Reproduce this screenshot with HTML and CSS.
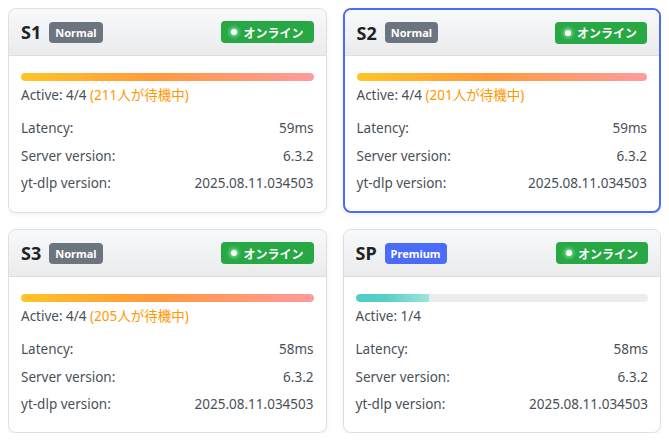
FILE: index.html
```html
<!DOCTYPE html>
<html lang="ja">
<head>
<meta charset="utf-8">
<link rel="stylesheet" href="styles.css">
</head>
<body>
<div class="grid">
  <div class="card">
    <div class="card-header">
      <div class="title"><span class="name">S1</span><span class="tier tier-normal">Normal</span></div>
      <span class="status"><span class="dot"></span>オンライン</span>
    </div>
    <div class="card-body">
      <div class="bar"><div class="fill fill-full" style="width:100%"></div></div>
      <div class="active">Active: 4/4 <span class="queue">(211人が待機中)</span></div>
      <div class="rows">
        <div class="row"><span>Latency:</span><span>59ms</span></div>
        <div class="row"><span>Server version:</span><span>6.3.2</span></div>
        <div class="row"><span>yt-dlp version:</span><span>2025.08.11.034503</span></div>
      </div>
    </div>
  </div>
  <div class="card selected">
    <div class="card-header">
      <div class="title"><span class="name">S2</span><span class="tier tier-normal">Normal</span></div>
      <span class="status"><span class="dot"></span>オンライン</span>
    </div>
    <div class="card-body">
      <div class="bar"><div class="fill fill-full" style="width:100%"></div></div>
      <div class="active">Active: 4/4 <span class="queue">(201人が待機中)</span></div>
      <div class="rows">
        <div class="row"><span>Latency:</span><span>59ms</span></div>
        <div class="row"><span>Server version:</span><span>6.3.2</span></div>
        <div class="row"><span>yt-dlp version:</span><span>2025.08.11.034503</span></div>
      </div>
    </div>
  </div>
  <div class="card">
    <div class="card-header">
      <div class="title"><span class="name">S3</span><span class="tier tier-normal">Normal</span></div>
      <span class="status"><span class="dot"></span>オンライン</span>
    </div>
    <div class="card-body">
      <div class="bar"><div class="fill fill-full" style="width:100%"></div></div>
      <div class="active">Active: 4/4 <span class="queue">(205人が待機中)</span></div>
      <div class="rows">
        <div class="row"><span>Latency:</span><span>58ms</span></div>
        <div class="row"><span>Server version:</span><span>6.3.2</span></div>
        <div class="row"><span>yt-dlp version:</span><span>2025.08.11.034503</span></div>
      </div>
    </div>
  </div>
  <div class="card">
    <div class="card-header">
      <div class="title"><span class="name">SP</span><span class="tier tier-premium">Premium</span></div>
      <span class="status"><span class="dot"></span>オンライン</span>
    </div>
    <div class="card-body">
      <div class="bar"><div class="fill fill-low" style="width:25%"></div></div>
      <div class="active">Active: 1/4</div>
      <div class="rows">
        <div class="row"><span>Latency:</span><span>58ms</span></div>
        <div class="row"><span>Server version:</span><span>6.3.2</span></div>
        <div class="row"><span>yt-dlp version:</span><span>2025.08.11.034503</span></div>
      </div>
    </div>
  </div>
</div>
</body>
</html>
```

FILE: styles.css
```css
* { box-sizing: border-box; }
body {
  margin: 8px;
  background: #fff;
  font-family: "Noto Sans", "Noto Sans CJK JP", sans-serif;
  color: #495057;
}
.grid {
  display: grid;
  grid-template-columns: 1fr 1fr;
  gap: 16px;
}
.card {
  border: 1px solid #dcdfe3;
  border-radius: 8px;
  overflow: hidden;
  background: #fff;
  box-shadow: 0 2px 5px rgba(0,0,0,0.06);
}
.card.selected {
  border: 2px solid #4a6cf7;
}
.card-header {
  display: flex;
  justify-content: space-between;
  align-items: center;
  padding: 12px;
  height: 47px;
  background: linear-gradient(180deg, #f8f9fa 0%, #e9ebed 100%);
  border-bottom: 1px solid #dcdfe3;
}
.selected .card-header { height: 46px; }
.title {
  display: flex;
  align-items: center;
  gap: 8px;
}
.name {
  font-size: 18px;
  font-weight: 700;
  color: #222;
  line-height: 1;
}
.tier {
  font-size: 11px;
  font-weight: 700;
  color: #fff;
  line-height: 21px;
  height: 21px;
  padding: 0 6px;
  border-radius: 4px;
}
.tier-normal { background: #6c757d; }
.tier-premium { background: #4a6cf7; }
.status {
  display: flex;
  align-items: center;
  gap: 6px;
  height: 22px;
  padding: 0 10px 0 10px;
  background: #28a745;
  color: #fff;
  border-radius: 4px;
  font-size: 12px;
  font-weight: 700;
  font-family: "Noto Sans CJK JP", sans-serif;
}
.dot {
  width: 6px;
  height: 6px;
  border-radius: 50%;
  background: #fff;
  box-shadow: 0 0 4px 1px rgba(180,255,190,0.9);
}
.card-body {
  padding: 17px 12px 18px 12px;
}
.bar {
  height: 8px;
  border-radius: 4px;
  background: #ececec;
  overflow: hidden;
}
.fill { height: 100%; border-radius: 4px 0 0 4px; }
.fill-full { background: linear-gradient(90deg, #ffc425 0%, #ff9a3c 45%, #ff9a9e 100%); border-radius: 4px; }
.fill-low { background: linear-gradient(90deg, #4ecdc4 0%, #58cfc6 40%, #9fe3dd 100%); }
.active {
  margin-top: 4px;
  font-size: 13.5px;
  line-height: 20px;
}
.queue { color: #ff9800; }
.rows {
  margin-top: 13px;
  display: flex;
  flex-direction: column;
  gap: 7.5px;
}
.row {
  display: flex;
  justify-content: space-between;
  font-size: 13.5px;
  line-height: 20px;
}
```
